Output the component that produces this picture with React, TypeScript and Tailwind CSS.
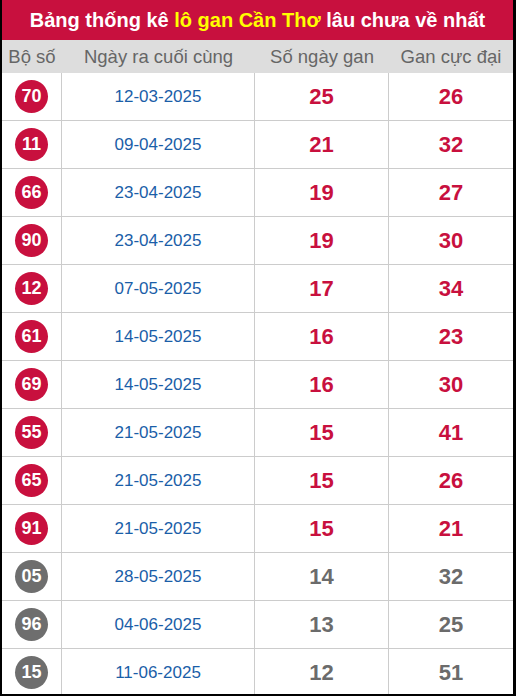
import React from 'react';

type Row = { num: string; date: string; days: number; max: number; hot: boolean };

const rows: Row[] = [
  { num: '70', date: '12-03-2025', days: 25, max: 26, hot: true },
  { num: '11', date: '09-04-2025', days: 21, max: 32, hot: true },
  { num: '66', date: '23-04-2025', days: 19, max: 27, hot: true },
  { num: '90', date: '23-04-2025', days: 19, max: 30, hot: true },
  { num: '12', date: '07-05-2025', days: 17, max: 34, hot: true },
  { num: '61', date: '14-05-2025', days: 16, max: 23, hot: true },
  { num: '69', date: '14-05-2025', days: 16, max: 30, hot: true },
  { num: '55', date: '21-05-2025', days: 15, max: 41, hot: true },
  { num: '65', date: '21-05-2025', days: 15, max: 26, hot: true },
  { num: '91', date: '21-05-2025', days: 15, max: 21, hot: true },
  { num: '05', date: '28-05-2025', days: 14, max: 32, hot: false },
  { num: '96', date: '04-06-2025', days: 13, max: 25, hot: false },
  { num: '15', date: '11-06-2025', days: 12, max: 51, hot: false },
];

export default function App() {
  return (
    <div
      className="w-[516px] h-[696px] overflow-hidden bg-white border-l-2 border-r-[3px] border-b-2 border-black"
      style={{ fontFamily: '"Liberation Sans", Arial, sans-serif' }}
    >
      <div className="h-[40px] bg-[#c8103e] flex items-center justify-center text-[20px] font-bold text-white">
        <span>
          Bảng thống kê <span className="text-[#ffff00]">lô gan Cần Thơ</span> lâu chưa về nhất
        </span>
      </div>
      <div className="grid grid-cols-[60px_193px_134px_1fr] h-[33px] bg-[#dddddd] text-[18.5px] text-[#666666] items-center text-center">
        <div>Bộ số</div>
        <div>Ngày ra cuối cùng</div>
        <div>Số ngày gan</div>
        <div>Gan cực đại</div>
      </div>
      {rows.map((r, i) => {
        const numColor = r.hot ? 'text-[#c8103e]' : 'text-[#6b6b6b]';
        return (
          <div key={i} className="grid grid-cols-[60px_193px_134px_1fr] h-[48px] border-b border-[#cccccc]">
            <div className="flex items-center justify-center border-r border-[#cccccc]">
              <div
                className={`w-[33px] h-[33px] rounded-full flex items-center justify-center text-white font-bold text-[18px] ${
                  r.hot ? 'bg-[#c8103e]' : 'bg-[#6e6e6e]'
                }`}
              >
                {r.num}
              </div>
            </div>
            <div className="flex items-center justify-center border-r border-[#cccccc] text-[17px] text-[#1a5ea8]">
              {r.date}
            </div>
            <div className={`flex items-center justify-center border-r border-[#cccccc] text-[22px] font-bold ${numColor}`}>
              {r.days}
            </div>
            <div className={`flex items-center justify-center text-[22px] font-bold ${numColor}`}>{r.max}</div>
          </div>
        );
      })}
    </div>
  );
}
